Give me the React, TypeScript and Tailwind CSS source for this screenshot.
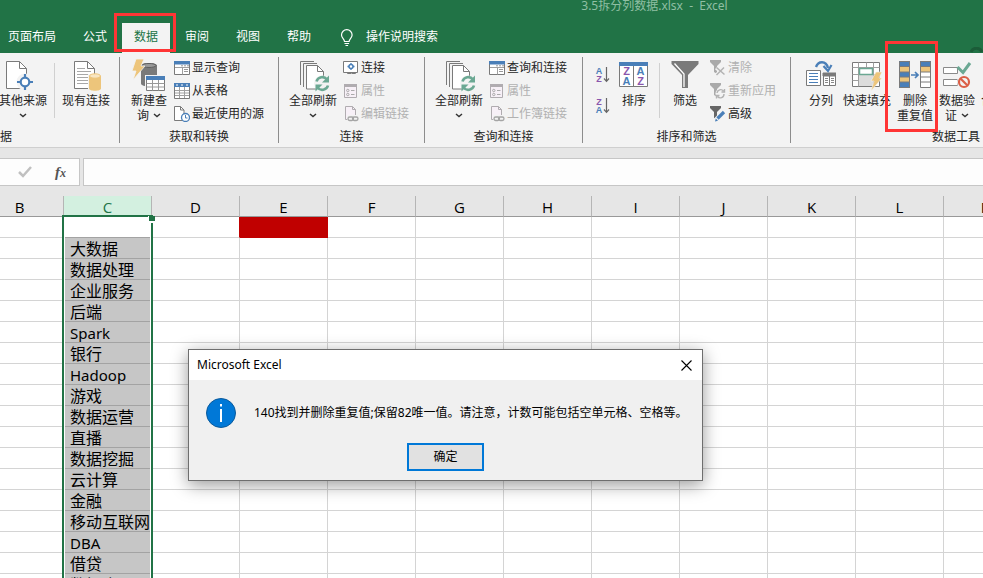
import React from "react";

const BLUE = "#4a7fb8";
const GREY = "#7a7a7a";
const SAND = "#edc57b";
const TEAL = "#6ba893";

function Chevron() {
  return (
    <svg width="8" height="5" viewBox="0 0 8 5" fill="none" stroke="#333" strokeWidth="1.4" aria-hidden="true">
      <path d="M1 1l3 2.6L7 1" />
    </svg>
  );
}

function OtherSourcesIcon() {
  return (
    <svg width="36" height="32" viewBox="0 0 36 32" fill="none" aria-hidden="true">
      <path d="M1.5 1.5h13l7 7v20h-20z" fill="#fff" stroke={GREY} />
      <path d="M14.5 1.5v7h7" stroke={GREY} />
      <circle cx="20" cy="22" r="8.5" fill="#f3f3f3" />
      <circle cx="20" cy="22" r="4.3" fill="#fff" stroke={BLUE} strokeWidth="2.2" />
      <path d="M20 14v4M20 26v4M12 22h4M24 22h4" stroke={BLUE} strokeWidth="2.2" />
    </svg>
  );
}

function ExistingConnectionsIcon() {
  return (
    <svg width="32" height="32" viewBox="0 0 32 32" fill="none" aria-hidden="true">
      <path d="M4.5 1.5h13l7 7v20h-20z" fill="#fff" stroke={GREY} />
      <path d="M17.5 1.5v7h7" stroke={GREY} />
      <path d="M7 8.5h8M7 11.5h14M7 14.5h11M7 17.5h11M7 20.5h11M7 23.5h11" stroke="#a8a8a8" />
      <path d="M18 14v17h14V14z" fill="#f3f3f3" />
      <path d="M19 16v12.5c0 3 12 3 12 0V16z" fill={SAND} />
      <ellipse cx="25" cy="16" rx="5.5" ry="2.2" fill="#f9e6c2" stroke={SAND} />
    </svg>
  );
}

function NewQueryIcon() {
  return (
    <svg width="34" height="32" viewBox="0 0 34 32" fill="none" overflow="visible" aria-hidden="true">
      <path d="M9 5.5c0-3.5 16-3.500 16 0v18c0 4-16 4-16 0z" fill={GREY} />
      <ellipse cx="17" cy="5.500" rx="7" ry="2" fill="#9a9a9a" stroke="#5f5f5f" />
      <path d="M4-1h8L9 6h4L1 20l3-9H0z" fill={SAND} stroke="#f3f3f3" strokeWidth=".8" />
      <path d="M13 15h21v17H13z" fill="#f3f3f3" />
      <path d="M14.500 17.500h18v13h-18z" fill="#fff" stroke={GREY} />
      <path d="M14 16h19v4H14z" fill={BLUE} />
      <path d="M14.500 23.500h18M14.500 27h18M20.500 20v10.500M26.500 20v10.500" stroke="#999" />
    </svg>
  );
}

function RefreshAllIcon() {
  return (
    <svg width="32" height="32" viewBox="0 0 32 32" fill="none" overflow="visible" aria-hidden="true">
      <path d="M3.500 25V1.500H17" stroke={GREY} />
      <path d="M6.500 27V3.500H20" stroke={GREY} />
      <path d="M9.500 5.500h11l6 6v17.500h-17z" fill="#fff" stroke={GREY} />
      <path d="M20.500 5.500v6h6" stroke={GREY} />
      <circle cx="25" cy="23.500" r="8" fill="#f3f3f3" />
      <g stroke={TEAL} strokeWidth="2.600">
        <path d="M19.500 21.500a6 6 0 0 1 10.500-2" />
        <path d="M31 25.500a6 6 0 0 1-10.500 2" />
        <path d="M32 15.500v7h-7z" fill={TEAL} stroke="none" />
        <path d="M18.500 31.500v-7h7z" fill={TEAL} stroke="none" />
      </g>
    </svg>
  );
}

function SortIcon() {
  return (
    <svg width="30" height="32" viewBox="0 0 30 32" fill="none" aria-hidden="true">
      <path d="M.5 3.500h28v23H.5z" fill="#fff" stroke={GREY} />
      <path d="M0 2h29v4H0z" fill={BLUE} />
      <path d="M14.500 6v20.500" stroke={GREY} />
      <g className="font-['Liberation_Sans',sans-serif] text-[11px] font-bold" textAnchor="middle">
        <text x="7.500" y="15" fill="#8a56ac">Z</text>
        <text x="7.500" y="25" fill={BLUE}>A</text>
        <text x="21.500" y="15" fill={BLUE}>A</text>
        <text x="21.500" y="25" fill="#8a56ac">Z</text>
      </g>
    </svg>
  );
}

function SortOrderIcon({ top, bottom }: { top: string; bottom: string }) {
  const tint = (c: string) => (c === "A" ? BLUE : "#8a56ac");
  return (
    <svg width="15" height="18" viewBox="0 0 15 18" fill="none" aria-hidden="true">
      <g className="font-['Liberation_Sans',sans-serif] text-[9px] font-bold" textAnchor="middle">
        <text x="4" y="8" fill={tint(top)}>{top}</text>
        <text x="4" y="16" fill={tint(bottom)}>{bottom}</text>
      </g>
      <path d="M11.500 1v14M9 12.500l2.500 2.800 2.500-2.800" stroke="#666" strokeWidth="1.200" />
    </svg>
  );
}

function FilterIcon() {
  return (
    <svg width="28" height="32" viewBox="0 0 28 32" fill="none" aria-hidden="true">
      <path d="M.5 1h27v3L17 15v13h-6V15L.5 4z" fill={GREY} />
      <path d="M3.500 3.500L13 14v13" stroke="#fff" strokeWidth="1.300" />
    </svg>
  );
}

function TextToColumnsIcon() {
  return (
    <svg width="30" height="32" viewBox="0 0 30 32" fill="none" aria-hidden="true">
      <path d="M.5 10.500h14v15H.500z" fill="#fff" stroke={GREY} />
      <path d="M3 13.500h9M3 16.500h9M3 19.500h9M3 22.500h9" stroke={BLUE} />
      <path d="M17.500 13.500h12v12h-12z" fill="#fff" stroke={GREY} />
      <path d="M17 13h13v3H17zM23.500 13v13" stroke={GREY} fill={GREY} />
      <path d="M19 18.500h3M19 20.500h3M19 22.500h3M25 18.500h3M25 20.500h3M25 22.500h3" stroke="#888" />
      <path d="M10 7C12 1 20 0 22 8" stroke={BLUE} strokeWidth="2.400" />
      <path d="M17.500 6l4.500 5 3.500-6" stroke={BLUE} strokeWidth="2.200" />
    </svg>
  );
}

function FlashFillIcon() {
  return (
    <svg width="30" height="32" viewBox="0 0 30 32" fill="none" aria-hidden="true">
      <path d="M.500 2.500h27v24H.500z" fill="#fff" stroke={GREY} />
      <path d="M7 14h14v12H7z" fill="#dcdcdc" />
      <path d="M.500 7.500h27M.500 14.500h27M.500 20.500h6M21.500 20.500h6M6.500 2.500v24M21.500 2.500v24M14.500 2.500v5" stroke="#a0a0a0" />
      <path d="M7.500 8.500h13v6h-13z" fill="#fff" stroke={TEAL} strokeWidth="1.500" />
      <path d="M24 12h6l-3 6h3L19 31l3-10h-3z" fill={SAND} stroke="#f3f3f3" strokeWidth=".6" />
    </svg>
  );
}

function RemoveDuplicatesIcon() {
  return (
    <svg width="32" height="32" viewBox="0 0 32 32" fill="none" aria-hidden="true">
      <path d="M0 1h11v27H0z" fill={BLUE} />
      <path d="M0 7h11v5H0zM0 17h11v5H0z" fill={SAND} />
      <path d="M.5 1.500h10v26H.500zM.500 6.500h10M.500 12h10M.500 17h10M.500 22h10" stroke={GREY} />
      <path d="M21 1h11v27H21z" fill="#fff" />
      <path d="M21 1h11v6H21z" fill={BLUE} />
      <path d="M21 7h11v5H21z" fill={SAND} />
      <path d="M21.500 1.500h10v26h-10zM21.500 6.500h10M21.500 12h10M21.500 17h10M21.500 22h10" stroke={GREY} />
      <path d="M12 15h7M16 12l3 3-3 3" stroke={BLUE} strokeWidth="1.700" />
    </svg>
  );
}

function ValidationIcon() {
  return (
    <svg width="30" height="32" viewBox="0 0 30 32" fill="none" aria-hidden="true">
      <path d="M1.500 7.500h14v6h-14zM1.500 19.500h14v6h-14z" fill="#fff" stroke="#8a8a8a" />
      <path d="M15.500 7l5.500 5.500L28 3" stroke={TEAL} strokeWidth="3" />
      <circle cx="22" cy="22" r="7" fill="#f3f3f3" />
      <circle cx="22" cy="22" r="5" stroke="#db5f47" strokeWidth="2.200" />
      <path d="M18.500 18.500l7 7" stroke="#db5f47" strokeWidth="2.200" />
    </svg>
  );
}

function SmallIcon({ children }: { children: React.ReactNode }) {
  return (
    <svg width="16" height="16" viewBox="0 0 16 16" fill="none" className="shrink-0" aria-hidden="true">
      {children}
    </svg>
  );
}

const paneIcon = (
  <SmallIcon>
    <path d="M.5 1.500h15v13H.5z" fill="#fff" stroke={GREY} />
    <path d="M0 1h16v3.500H0z" fill={BLUE} />
    <path d="M1 7.500h14M8.500 7.500v7" stroke="#a0a0a0" />
    <path d="M10 9.500h4M10 11.500h4M7 5.800h2M10 5.800h2M13 5.800h2" stroke="#999" />
  </SmallIcon>
);
const tableIcon = (
  <SmallIcon>
    <path d="M.5 1.500h15v14H.5z" fill="#fff" stroke={GREY} />
    <path d="M0 0h16v4H0z" fill={BLUE} />
    <path d="M2 2h2M7 2h2M12 2h2" stroke="#fff" />
    <path d="M1 7.500h14M1 10h14M1 12.500h14M5.500 4v11M10.500 4v11" stroke="#a0a0a0" />
  </SmallIcon>
);
const recentIcon = (
  <SmallIcon>
    <path d="M.500.500h6l3.500 3.500v10.500h-9.500z" fill="#fff" stroke={GREY} />
    <path d="M6.500.500v3.500h3.500" stroke={GREY} />
    <circle cx="11.500" cy="11.500" r="4" fill="#fff" stroke={BLUE} strokeWidth="1.300" />
    <path d="M11.500 9v3h2" stroke={BLUE} />
  </SmallIcon>
);
const linkIcon = (
  <SmallIcon>
    <path d="M.5 1.500h14v11H.5z" fill="#fff" stroke={GREY} />
    <circle cx="8" cy="6.500" r="2" stroke={BLUE} strokeWidth="1.500" />
    <path d="M8 3v1.500M8 8.500v1.500M4.500 6.500h1.500M10 6.500h1.500" stroke={BLUE} strokeWidth="1.300" />
    <path d="M5 13h2.500M9.500 13h2.500" stroke={GREY} strokeWidth="2" strokeLinecap="round" />
  </SmallIcon>
);
const propsIcon = (
  <SmallIcon>
    <path d="M1.500 1.500h12v13h-12z" fill="#f7f0f7" stroke="#b0acb0" />
    <path d="M1 1h13v3H1z" fill="#b0acb0" />
    <circle cx="4.800" cy="7.500" r="1.200" stroke="#aaa" />
    <circle cx="4.800" cy="11.500" r="1.200" stroke="#aaa" />
    <path d="M8 7.500h3.500M8 11.500h3.500" stroke="#aaa" />
  </SmallIcon>
);
const editLinkIcon = (
  <SmallIcon>
    <path d="M2.500.500h7l3 3v10h-10z" fill="#f7f0f7" stroke="#b0acb0" />
    <path d="M9.500.500v3h3" stroke="#b0acb0" />
    <path d="M4 9h12v7H4z" fill="#f3f3f3" />
    <rect x="5" y="11" width="5.500" height="3.500" rx="1.700" stroke="#a5a5a5" strokeWidth="1.300" />
    <rect x="9.500" y="11" width="5.500" height="3.500" rx="1.700" stroke="#a5a5a5" strokeWidth="1.300" />
  </SmallIcon>
);
const clearIcon = (
  <SmallIcon>
    <path d="M0 0h11v2L7 6v8L4 12V6L0 2z" fill="#aaa" />
    <path d="M6 8l8 7M14 8l-8 7" stroke="#f3f3f3" strokeWidth="3" />
    <path d="M6.500 7.500l8 7M14 7.500l-7.500 7.500" stroke="#b3b3b3" strokeWidth="1.500" />
  </SmallIcon>
);
const reapplyIcon = (
  <SmallIcon>
    <path d="M0 0h11v2L7 6v8L4 12V6L0 2z" fill="#aaa" />
    <circle cx="10.500" cy="10.500" r="5" fill="#f3f3f3" />
    <path d="M7 10a3.700 3.700 0 0 1 6.500-2M14 11a3.700 3.700 0 0 1-6.500 2.500M14.500 6v3h-3M6.500 15.500v-3h3" stroke="#b3b3b3" strokeWidth="1.400" />
  </SmallIcon>
);
const advancedIcon = (
  <SmallIcon>
    <path d="M0 0h11v2L7 6v8L4 12V6L0 2z" fill="#666" />
    <path d="M5 15l9-9" stroke="#f3f3f3" strokeWidth="5" />
    <path d="M7.500 12.500l6.500-6.500" stroke={BLUE} strokeWidth="3.200" />
    <path d="M5 15.500l.8-3 2.200 2.200z" fill={BLUE} />
  </SmallIcon>
);

function BigButton({
  icon,
  lines,
  menu,
  width = "w-12",
  children,
}: {
  icon?: React.ReactNode;
  lines: string[];
  menu?: boolean;
  width?: string;
  children?: React.ReactNode;
}) {
  const last = lines.length - 1;
  return (
    <button type="button" className={`relative flex shrink-0 flex-col items-center pt-[3px] leading-[15px] ${width}`}>
      <span className="flex h-[33px] justify-center">{icon}</span>
      {lines.map((line, i) => (
        <span key={line} className="flex items-center gap-1 whitespace-nowrap">
          {line}
          {menu && i === last && last > 0 && <Chevron />}
        </span>
      ))}
      {menu && last === 0 && (
        <span className="flex h-[15px] items-center">
          <Chevron />
        </span>
      )}
      {children}
    </button>
  );
}

type Item = { icon: React.ReactNode; label: string; disabled?: boolean };

function SmallButtons({ items }: { items: Item[] }) {
  return (
    <div className="-mt-px flex flex-col">
      {items.map((item) => (
        <button
          key={item.label}
          type="button"
          disabled={item.disabled}
          className="flex h-[23px] items-center gap-0.5 whitespace-nowrap disabled:text-[#b1b1b1]"
        >
          {item.icon}
          {item.label}
        </button>
      ))}
    </div>
  );
}

function Group({ label, width, className = "", children }: { label: string; width: string; className?: string; children: React.ReactNode }) {
  return (
    <section className={`flex shrink-0 flex-col ${width}`}>
      <div className={`flex h-[72px] ${className}`}>{children}</div>
      <h2 className="text-center leading-4">{label}</h2>
    </section>
  );
}

const Divider = () => <div className="h-[86px] w-px shrink-0 bg-[#8c8c8c]" />;
const InnerDivider = () => <div className="mt-1.5 h-[55px] w-px shrink-0 bg-[#d0d0d0]" />;

function Ribbon() {
  return (
    <div className="flex h-[95px] shrink-0 border-b border-[#cfcfcf] bg-[#f3f3f3] pt-1 text-xs text-[#262626]">
      <section className="flex w-[119px] shrink-0 flex-col">
        <div className="flex h-[72px] gap-[7px]">
          <div className="-ml-px">
            <BigButton icon={<OtherSourcesIcon />} lines={["其他来源"]} menu />
          </div>
          <InnerDivider />
          <BigButton icon={<ExistingConnectionsIcon />} lines={["现有连接"]} />
        </div>
        <h2 className="leading-4">据</h2>
      </section>
      <Divider />
      <Group label="获取和转换" width="w-[158px]" className="gap-1.5 pl-2.5">
        <BigButton icon={<NewQueryIcon />} lines={["新建查", "询"]} menu width="w-[38px]" />
        <SmallButtons
          items={[
            { icon: paneIcon, label: "显示查询" },
            { icon: tableIcon, label: "从表格" },
            { icon: recentIcon, label: "最近使用的源" },
          ]}
        />
      </Group>
      <Divider />
      <Group label="连接" width="w-[145px]" className="gap-1.5 pl-2.5">
        <BigButton icon={<RefreshAllIcon />} lines={["全部刷新"]} menu />
        <SmallButtons
          items={[
            { icon: linkIcon, label: "连接" },
            { icon: propsIcon, label: "属性", disabled: true },
            { icon: editLinkIcon, label: "编辑链接", disabled: true },
          ]}
        />
      </Group>
      <Divider />
      <Group label="查询和连接" width="w-[157px]" className="gap-1.5 pl-2.5">
        <BigButton icon={<RefreshAllIcon />} lines={["全部刷新"]} menu />
        <SmallButtons
          items={[
            { icon: paneIcon, label: "查询和连接" },
            { icon: propsIcon, label: "属性", disabled: true },
            { icon: editLinkIcon, label: "工作簿链接", disabled: true },
          ]}
        />
      </Group>
      <Divider />
      <Group label="排序和筛选" width="w-[207px]" className="gap-2.5 pl-3">
        <div className="flex w-3.5 flex-col gap-[13px] pt-[9px]">
          <button type="button" aria-label="升序">
            <SortOrderIcon top="A" bottom="Z" />
          </button>
          <button type="button" aria-label="降序">
            <SortOrderIcon top="Z" bottom="A" />
          </button>
        </div>
        <BigButton icon={<SortIcon />} lines={["排序"]} width="w-[30px]" />
        <InnerDivider />
        <BigButton icon={<FilterIcon />} lines={["筛选"]} width="w-[30px]" />
        <SmallButtons
          items={[
            { icon: clearIcon, label: "清除", disabled: true },
            { icon: reapplyIcon, label: "重新应用", disabled: true },
            { icon: advancedIcon, label: "高级" },
          ]}
        />
      </Group>
      <Divider />
      <Group label="数据工具" width="w-[330px]" className="gap-1.5 pl-3.5">
        <BigButton icon={<TextToColumnsIcon />} lines={["分列"]} width="w-8" />
        <BigButton icon={<FlashFillIcon />} lines={["快速填充"]} />
        <BigButton icon={<RemoveDuplicatesIcon />} lines={["删除", "重复值"]} width="w-9">
          <span className="pointer-events-none absolute -left-3 -top-4 h-[91px] w-[53px] border-[3px] border-[#ff3535]" />
        </BigButton>
        <BigButton icon={<ValidationIcon />} lines={["数据验", "证"]} menu width="w-9" />
        <BigButton lines={["合"]} width="w-3" />
      </Group>
    </div>
  );
}

const TABS = ["页面布局", "公式", "数据", "审阅", "视图", "帮助"];

function TitleBar() {
  return (
    <header className="relative h-[53px] shrink-0 bg-[#217346] text-xs text-white">
      <h1 className="h-[23px] whitespace-pre pl-[326px] text-center leading-3 text-[#8fbfa3]">
        {"3.5拆分列数据.xlsx  -  Excel"}
      </h1>
      <nav className="-ml-1 flex h-[30px] gap-[3px] leading-7">
        {TABS.map((tab) =>
          tab === "数据" ? (
            <button key={tab} type="button" className="relative flex bg-[#f3f3f3] px-3 text-[#217346]">
              {tab}
              <span className="pointer-events-none absolute -left-2 -top-2.5 h-[39px] w-[62px] border-[3px] border-[#ff3535]" />
            </button>
          ) : (
            <button key={tab} type="button" className="flex px-3">
              {tab}
            </button>
          ),
        )}
        <button type="button" className="flex gap-3 pl-3.5">
          <svg width="14" height="18" viewBox="0 0 14 18" fill="none" stroke="#fff" strokeWidth="1.200" className="mt-1.5" aria-hidden="true">
            <path d="M4.500 12.500c0-2.500-3-3.500-3-6.500a5.300 5.300 0 0 1 10.600 0c0 3-3 4-3 6.500zM4.500 14.500h4.600M5.500 16.500h2.600" />
          </svg>
          操作说明搜索
        </button>
      </nav>
      <svg width="13" height="6" viewBox="0 0 13 6" className="absolute bottom-0 right-0" fill="none" aria-hidden="true">
        <path d="M1 5c2-5 9-5 11 0" stroke="#1b5c38" strokeWidth="3" />
      </svg>
    </header>
  );
}

function FormulaBar() {
  return (
    <div className="flex shrink-0 gap-[3px] bg-[#e6e6e6] py-2.5">
      <div className="flex h-7 w-20 shrink-0 items-center border-y border-r border-[#c6c6c6] bg-[#fdfdfd]">
        <button type="button" aria-label="输入" className="ml-[18px]">
          <svg width="14" height="12" viewBox="0 0 14 12" fill="none" stroke="#c0c0c0" strokeWidth="2.500" aria-hidden="true">
            <path d="M1 6l4 4 8-9" />
          </svg>
        </button>
        <button type="button" className="ml-[23px] font-['Liberation_Serif',serif] text-[15px] font-bold italic leading-5 text-[#555]">
          f<span className="text-xs">x</span>
        </button>
      </div>
      <input aria-label="编辑栏" className="h-7 min-w-0 flex-1 border border-r-0 border-[#c6c6c6] bg-[#fdfdfd] px-2 outline-none" />
    </div>
  );
}

const COLUMNS = ["B", "C", "D", "E", "F", "G", "H", "I", "J", "K", "L", "M"];
const VALUES = [
  "", "大数据", "数据处理", "企业服务", "后端", "Spark", "银行", "Hadoop", "游戏",
  "数据运营", "直播", "数据挖掘", "云计算", "金融", "移动互联网", "DBA", "借贷", "数据库",
];

function Cell({ column, row }: { column: string; row: number }) {
  if (column === "C") {
    return (
      <td className="h-[21px] border-r border-[#d4d4d4] p-0">
        <div
          className={`mx-px h-[21px] overflow-hidden whitespace-nowrap border-b border-[#a3a3a3] pl-[5px] leading-[22px] ${
            row === 0 ? "bg-white" : "bg-[#c6c6c6]"
          } ${/^[A-Za-z]/.test(VALUES[row]) ? "text-[15px]" : "text-base"}`}
        >
          {VALUES[row]}
        </div>
      </td>
    );
  }
  if (row === 0 && column === "E") {
    return <td className="h-[21px] border-b border-r border-[#c00000] bg-[#c00000] p-0" />;
  }
  if (row === 0 && column === "D") {
    return <td className="h-[21px] border-b border-r border-b-[#d4d4d4] border-r-[#c00000] p-0" />;
  }
  return <td className="h-[21px] border-b border-r border-[#d4d4d4] p-0" />;
}

function Sheet() {
  return (
    <div className="relative min-h-0 flex-1 overflow-hidden bg-white">
      <table className="w-[1032px] table-fixed border-separate border-spacing-0 text-black">
        <colgroup>
          {COLUMNS.map((c) => (
            <col key={c} className={c === "B" ? "w-16" : "w-[88px]"} />
          ))}
        </colgroup>
        <thead>
          <tr>
            {COLUMNS.map((c) => (
              <th
                key={c}
                scope="col"
                className={`h-[21px] border-b border-r border-b-[#999] border-r-[#b5b5b5] p-0 pt-0.5 font-['Open_Sans',sans-serif] text-[15px] font-normal leading-[18px] ${
                  c === "C" ? "bg-[#d3f0e0] text-[#217346]" : "bg-[#e6e6e6]"
                } ${c === "B" ? "pr-6" : ""}`}
              >
                {c}
              </th>
            ))}
          </tr>
        </thead>
        <tbody>
          {VALUES.map((_, row) => (
            <tr key={row}>
              {COLUMNS.map((c) => (
                <Cell key={c} column={c} row={row} />
              ))}
            </tr>
          ))}
        </tbody>
      </table>
      <div className="pointer-events-none absolute -bottom-1 left-[62px] top-[19px] w-[91px] border-2 border-[#217346]">
        <span className="absolute -right-[4px] -top-px h-[7px] w-[7px] border-b-2 border-l border-white bg-[#217346]" />
      </div>
    </div>
  );
}

function MessageDialog() {
  return (
    <div
      role="dialog"
      aria-label="Microsoft Excel"
      className="absolute left-[188px] top-[349px] w-[515px] border border-[#6e6e6e] bg-[#f0f0f0] text-xs text-black shadow-[0_4px_16px_rgba(0,0,0,0.4)]"
    >
      <div className="flex h-[30px] items-center justify-between bg-white pl-2 pr-2.5">
        <span>Microsoft Excel</span>
        <button type="button" aria-label="关闭">
          <svg width="11" height="11" viewBox="0 0 11 11" stroke="#000" strokeWidth="1.100" aria-hidden="true">
            <path d="M.5.5l10 10M10.500.500l-10 10" />
          </svg>
        </button>
      </div>
      <div className="flex items-center gap-[17px] pl-4 pt-[17px]">
        <svg width="32" height="32" viewBox="0 0 32 32" className="shrink-0" aria-hidden="true">
          <circle cx="16" cy="16" r="14.500" fill="#0078d7" stroke="#0a5a9c" />
          <path d="M15 12h2v13h-2zM15 7h2v2.500h-2z" fill="#fff" />
        </svg>
        <p className="whitespace-nowrap">140找到并删除重复值;保留82唯一值。请注意，计数可能包括空单元格、空格等。</p>
      </div>
      <div className="flex justify-center pb-[9px] pt-3.5">
        <button type="button" className="h-7 w-[77px] border-2 border-[#0078d7] bg-[#e1e1e1]">
          确定
        </button>
      </div>
    </div>
  );
}

export default function App() {
  return (
    <div className="relative flex h-screen flex-col overflow-hidden bg-white font-['Noto_Sans','Noto_Sans_CJK_SC',sans-serif]">
      <TitleBar />
      <Ribbon />
      <FormulaBar />
      <Sheet />
      <MessageDialog />
    </div>
  );
}
